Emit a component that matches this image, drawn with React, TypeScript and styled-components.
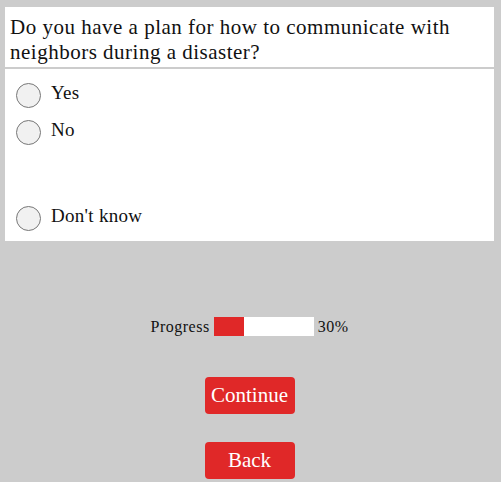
import React from 'react';
import styled, {createGlobalStyle} from 'styled-components';

const GlobalStyle = createGlobalStyle`
  html, body {
    margin: 0;
    padding: 0;
    background: #cccccc;
  }
  body {
    font-family: "Liberation Serif", "DejaVu Serif", serif;
    color: #111;
  }
`;

const options = ['Yes', 'No', '', "Don't know"];

const App: React.FC = () => {
  return (
    <Page>
      <GlobalStyle/>
      <QuestionBox>
        <Question>Do you have a plan for how to communicate with neighbors during a disaster?</Question>
      </QuestionBox>
      <OptionsBox>
        {options.map((label, i) => (
          label ? (
            <OptionRow key={i}>
              <Radio/>
              <OptionLabel>{label}</OptionLabel>
            </OptionRow>
          ) : <Spacer key={i}/>
        ))}
      </OptionsBox>
      <ProgressRow>
        <ProgressLabel>Progress</ProgressLabel>
        <ProgressTrack>
          <ProgressFill style={{width: '30%'}}/>
        </ProgressTrack>
        <ProgressLabel>30%</ProgressLabel>
      </ProgressRow>
      <Buttons>
        <Button>Continue</Button>
        <Button>Back</Button>
      </Buttons>
    </Page>
  );
};
export default App;

const Page = styled.div`
  width: 501px;
  height: 482px;
  padding: 7px 7px 0 5px;
  box-sizing: border-box;
  overflow: hidden;
`;

const QuestionBox = styled.div`
  background: #fff;
  padding: 8px 5px 4px 5px;
  height: 60px;
  box-sizing: border-box;
`;

const Question = styled.div`
  font-size: 21px;
  line-height: 25px;
  letter-spacing: 0.5px;
`;

const OptionsBox = styled.div`
  background: #fff;
  margin-top: 2px;
  padding: 14px 10px 11px 11px;
  height: 172px;
  box-sizing: border-box;
`;

const OptionRow = styled.div`
  display: flex;
  align-items: flex-start;
  height: 37px;
`;

const Spacer = styled.div`
  height: 49px;
`;

const Radio = styled.span`
  width: 25px;
  height: 25px;
  border-radius: 50%;
  border: 1px solid #777;
  background: #f1f1f1;
  box-sizing: border-box;
  flex: none;
`;

const OptionLabel = styled.span`
  margin-left: 10px;
  font-size: 19px;
  line-height: 20px;
  letter-spacing: 0.3px;
`;

const ProgressRow = styled.div`
  display: flex;
  justify-content: center;
  align-items: center;
  gap: 4px;
  margin-top: 76px;
  height: 19px;
`;

const ProgressLabel = styled.span`
  font-size: 16px;
  letter-spacing: 0.5px;
`;

const ProgressTrack = styled.div`
  width: 100px;
  height: 19px;
  background: #fff;
`;

const ProgressFill = styled.div`
  height: 100%;
  background: #e02828;
`;

const Buttons = styled.div`
  display: flex;
  flex-direction: column;
  align-items: center;
  gap: 28px;
  margin-top: 41px;
`;

const Button = styled.button`
  width: 90px;
  height: 37px;
  border: none;
  border-radius: 4px;
  background: #e02828;
  color: #fff;
  font-family: "Liberation Serif", "DejaVu Serif", serif;
  font-size: 21px;
  padding: 0;
`;
